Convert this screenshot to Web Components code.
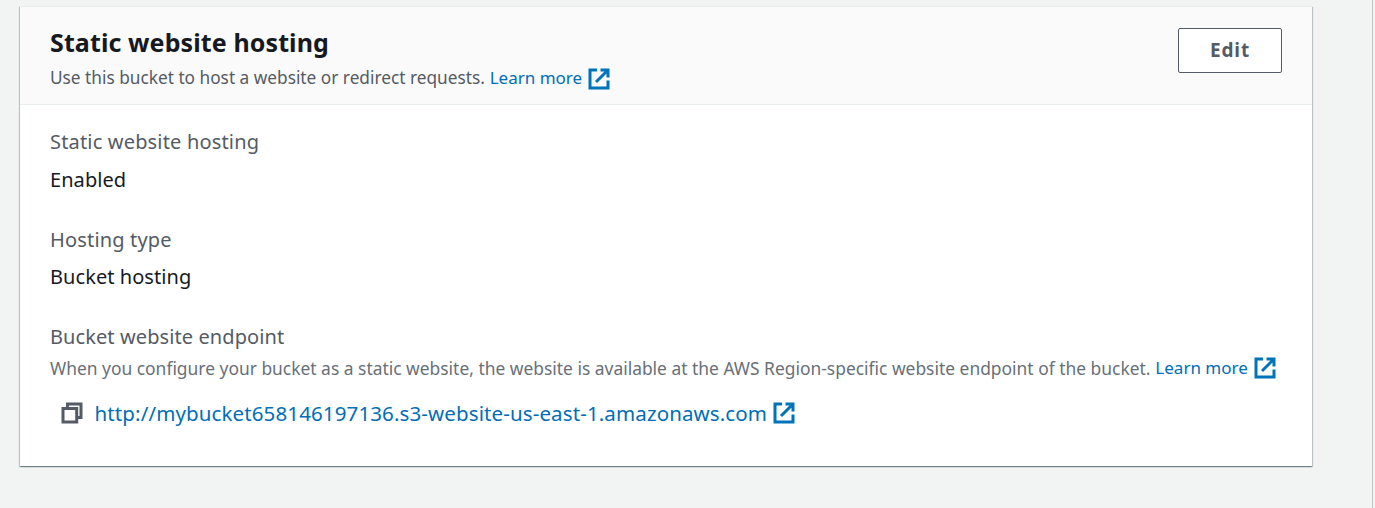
<!DOCTYPE html>
<html lang="en"><head><meta charset="utf-8"><title>Static website hosting</title>
<style>
html,body{margin:0;height:100%;overflow:hidden}
body{background:#f2f3f3;font-family:"Noto Sans","Open Sans",sans-serif;color:#16191f}
</style></head><body>
<bucket-page></bucket-page>
<script>
const define=(name,html)=>{
  const t=document.createElement('template');t.innerHTML=html;
  customElements.define(name,class extends HTMLElement{
    constructor(){super();this.attachShadow({mode:'open'}).append(t.content.cloneNode(true));}
  });
};
define('external-icon',`<style>:host{display:block;width:22px;height:22px;color:#0073bb;flex:none}svg{display:block}</style>
<svg width="22" height="22" viewBox="0 0 22 22" fill="none" stroke="currentColor" stroke-width="3"><path d="M9 2H2v18h18v-7.500M12.500 2h7.500v7.500M19.500 2.500L8 14"/></svg>`);
define('copy-icon',`<style>:host{display:block;width:22px;height:22px;color:#545b64;flex:none}svg{display:block}</style>
<svg width="22" height="22" viewBox="0 0 22 22" fill="none" stroke="currentColor" stroke-width="3"><path d="M2 6.500h13.700V20H2z"/><path d="M6.500 6.500V2H20v13.600h-4.500"/></svg>`);
define('text-link',`<style>:host{display:inline-flex;align-items:center;color:#006eb6;gap:6px}a{color:inherit;text-decoration:none}external-icon{margin-top:var(--icon-drop,2px)}</style>
<a><slot></slot></a><external-icon></external-icon>`);
define('edit-button',`<style>:host{display:block}button{box-sizing:border-box;width:104px;height:45px;padding:0 0 2px;border:1px solid #545b64;border-radius:2px;background:#fff;color:#545b64;font:700 19px/40px "Noto Sans",sans-serif;letter-spacing:.9px}</style><button><slot></slot></button>`);
define('key-value',`<style>:host{display:block}.k{color:#545b64;font-size:20px;line-height:28px;letter-spacing:.17px}.v{font-size:20px;line-height:28px;margin-top:9.500px;letter-spacing:.06px}</style>
<div class="k"><slot name="label"></slot></div><div class="v"><slot></slot></div>`);
define('settings-card',`<style>:host{display:block;box-sizing:border-box;width:1292px;height:460px;background:#fff;box-shadow:0 1px 1px 0 rgba(0,28,36,.3),1px 1px 1px 0 rgba(0,28,36,.18),-1px 1px 1px 0 rgba(0,28,36,.18)}
header{display:flex;justify-content:space-between;box-sizing:border-box;height:99px;padding:21px 30px 0;background:#fafafa;border-top:1px solid #eaeded;border-bottom:1px solid #eaeded}
main{padding:23px 30px}</style><header><slot name="title"></slot><slot name="action"></slot></header><main><slot></slot></main>`);
define('bucket-page',`<style>:host{display:block;box-sizing:border-box;height:508px;width:1373px;padding:6px 0 0 20px;border-right:1px solid #c0c6c6}
h2{margin:-2px 0 0;font-size:25px;line-height:32px;letter-spacing:.11px}
.d{display:flex;align-items:center;font-size:17.250px;line-height:24px;color:#545b64;white-space:nowrap;margin-top:8px}
.d text-link{margin-left:4.900px;font-size:17px}
.f{font-size:17.410px;color:#687078;margin-top:5px;--icon-drop:0px}
.row{display:flex;align-items:center;gap:11.500px;padding-left:11px;margin-top:19px}
.u{font-size:20.500px;line-height:28px;letter-spacing:.12px;--icon-drop:0px}
key-value{margin-bottom:32px}.k{font-size:20px;line-height:28px;color:#545b64;letter-spacing:.09px}</style>
<settings-card><div slot="title"><h2>Static website hosting</h2><div class="d"><span>Use this bucket to host a website or redirect requests.</span><text-link>Learn more</text-link></div></div>
<edit-button slot="action">Edit</edit-button>
<key-value><span slot="label">Static website hosting</span>Enabled</key-value>
<key-value><span slot="label">Hosting type</span>Bucket hosting</key-value>
<div class="k">Bucket website endpoint</div>
<div class="d f"><span>When you configure your bucket as a static website, the website is available at the AWS Region-specific website endpoint of the bucket.</span><text-link>Learn more</text-link></div>
<div class="row"><copy-icon></copy-icon><text-link class="u">http://mybucket658146197136.s3-website-us-east-1.amazonaws.com</text-link></div>
</settings-card>`);
</script></body></html>
